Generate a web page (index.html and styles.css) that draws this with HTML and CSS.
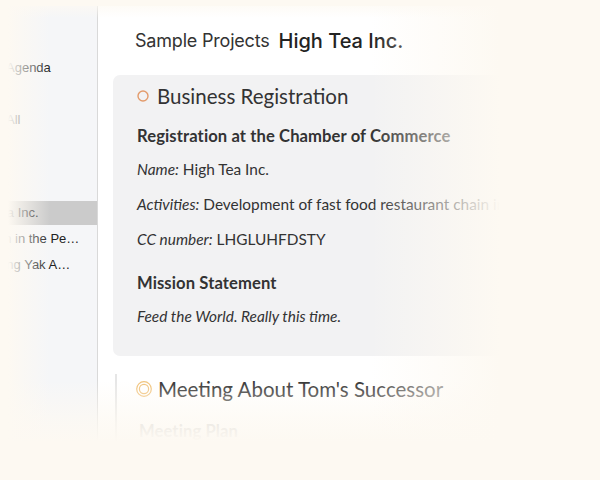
FILE: index.html
```html
<!DOCTYPE html>
<html>
<head>
<meta charset="utf-8">
<link rel="stylesheet" href="styles.css">
</head>
<body>
<div class="window">
  <aside class="sidebar">
    <ul class="nav">
      <li class="nav-item top">Agenda</li>
      <li class="nav-item top gap">All</li>
      <li class="nav-item top gap2">Projects</li>
      <li class="nav-item top small">r</li>
      <li class="nav-item proj selected">High Tea Inc.</li>
      <li class="nav-item proj">Lunch in the Pe…</li>
      <li class="nav-item proj">Sharing Yak A…</li>
    </ul>
  </aside>
  <main class="main">
    <header class="crumbs">
      <span class="crumb-parent">Sample Projects</span>
      <span class="crumb-current">High Tea Inc.</span>
    </header>
    <section class="card">
      <h2 class="task-title">
        <svg class="task-icon" width="14" height="14" viewBox="0 0 14 14"><circle cx="7" cy="7" r="5" fill="none" stroke="#e39b6b" stroke-width="1.4"/></svg>
        Business Registration
      </h2>
      <h3 class="sub">Registration at the Chamber of Commerce</h3>
      <p class="line"><em>Name:</em> High Tea Inc.</p>
      <p class="line"><em>Activities:</em> Development of fast food restaurant chain in Europe</p>
      <p class="line"><em>CC number:</em> LHGLUHFDSTY</p>
      <h3 class="sub mission">Mission Statement</h3>
      <p class="line"><em>Feed the World. Really this time.</em></p>
    </section>
    <section class="next">
      <h2 class="task-title">
        <svg class="task-icon" width="18" height="18" viewBox="0 0 18 18"><circle cx="9" cy="9" r="7.3" fill="none" stroke="#f0c27a" stroke-width="1.2"/><circle cx="9" cy="9" r="4.6" fill="none" stroke="#f0c27a" stroke-width="1.2"/></svg>
        Meeting About Tom's Successor
      </h2>
      <h3 class="sub plan">Meeting Plan</h3>
    </section>
  </main>
</div>
<div class="fade"></div>
</body>
</html>
```
FILE: styles.css
```css
html, body {
  margin: 0;
  padding: 0;
}
body {
  width: 600px;
  height: 480px;
  overflow: hidden;
  background: #fdf9f2;
  position: relative;
}
.window {
  display: flex;
  height: 480px;
  padding-top: 6px;
  box-sizing: border-box;
}
.sidebar {
  width: 97px;
  flex: none;
  background: #f5f6f8;
  border-right: 1px solid #d9d9d9;
  overflow: hidden;
  font-family: "Liberation Sans", Arial, sans-serif;
  font-size: 13px;
  color: #222;
}
.nav {
  list-style: none;
  margin: 0;
  padding: 50px 0 0 0;
}
.nav-item {
  height: 24px;
  line-height: 24px;
  white-space: nowrap;
}
.nav-item.top {
  padding-left: 6px;
}
.nav-item.gap {
  margin-top: 28px;
}
.nav-item.gap2 {
  margin-top: 14px;
  text-indent: -48px;
  color: #888;
}
.nav-item.small {
  text-indent: -2px;
  color: #bbb;
  margin-top: 3px;
}
.nav-item.proj {
  text-indent: -37px;
  margin-top: 2px;
}
.nav-item.proj + .nav-item.proj {
  text-indent: -24px;
}
.nav-item.proj:last-child {
  text-indent: -29px;
}
.nav-item.selected {
  background: #cbcbcb;
  margin-top: 4px;
}
.main {
  flex: 1;
  background: #fff;
  padding: 0 0 0 15px;
  font-family: "Lato", "Open Sans", sans-serif;
  color: #333;
}
.crumbs {
  height: 69px;
  display: flex;
  align-items: center;
  gap: 9px;
  padding-left: 22px;
  font-family: "Inter", "Liberation Sans", sans-serif;
}
.crumb-parent {
  font-size: 18px;
  color: #333;
  letter-spacing: -0.2px;
}
.crumb-current {
  font-size: 20px;
  font-weight: 500;
  color: #222;
}
.card {
  background: #f2f2f3;
  border-radius: 7px;
  padding: 6px 0 29px 24px;
}
.task-title {
  margin: 0;
  display: flex;
  align-items: center;
  font-size: 20.5px;
  font-weight: 400;
  color: #333;
  height: 30px;
}
.task-icon {
  margin-left: -1px;
  margin-right: 7px;
}
.sub {
  margin: 14px 0 0 0;
  font-size: 16.6px;
  font-weight: 700;
  color: #333;
  line-height: 22px;
  letter-spacing: 0.1px;
}
.line {
  margin: 11px 0 0 0;
  font-size: 15.4px;
  line-height: 22px;
  color: #333;
  white-space: nowrap;
}
.line + .line {
  margin-top: 13px;
}
.line em {
  font-style: italic;
}
.sub.mission {
  margin-top: 22px;
}
.next {
  margin-top: 18px;
  margin-left: 2px;
  padding-left: 22px;
  border-left: 2px solid #e6e6e6;
}
.next .task-icon {
  margin-left: -4px;
  margin-right: 5px;
}
.sub.plan {
  margin-top: 16px;
  color: #bbb;
}
.fade {
  position: absolute;
  inset: 0;
  pointer-events: none;
  background:
    linear-gradient(to bottom, #fdf9f2 0px, rgba(253,249,242,0) 18px),
    linear-gradient(to right, #fdf9f2 0px, #fdf9f2 8px, rgba(253,249,242,0.75) 18px, rgba(253,249,242,0) 50px),
    linear-gradient(to left, #fdf9f2 0px, #fdf9f2 100px, rgba(253,249,242,0.6) 150px, rgba(253,249,242,0) 230px),
    linear-gradient(to top, #fdf9f2 0px, #fdf9f2 38px, rgba(253,249,242,0.75) 58px, rgba(253,249,242,0) 100px);
}
```
